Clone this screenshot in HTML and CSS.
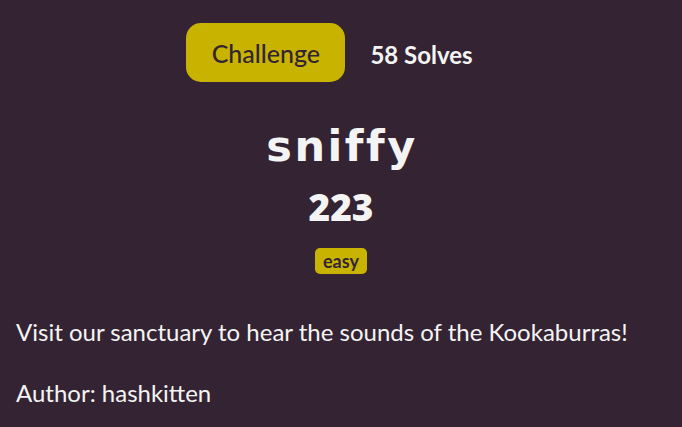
FILE: index.html
```html
<!DOCTYPE html>
<html>
<head>
<meta charset="utf-8">
<link rel="stylesheet" href="styles.css">
</head>
<body>
<div class="modal">
  <div class="tabs">
    <span class="tab active">Challenge</span>
    <span class="tab">58 Solves</span>
  </div>
  <h1 class="name">sniffy</h1>
  <div class="points">223</div>
  <div class="tags"><span class="tag">easy</span></div>
  <div class="desc">
    <p>Visit our sanctuary to hear the sounds of the Kookaburras!</p>
    <p>Author: hashkitten</p>
  </div>
</div>
</body>
</html>
```

FILE: styles.css
```css
html, body {
  margin: 0;
  padding: 0;
  background: #342433;
}
body {
  width: 682px;
  height: 427px;
  overflow: hidden;
  font-family: Lato, "Liberation Sans", sans-serif;
  color: #f4f4f4;
}
.modal {
  padding: 23px 16px 0 16px;
}
.tabs {
  display: flex;
  justify-content: center;
  align-items: center;
  gap: 25px;
  padding-right: 23px;
}
.tab {
  font-family: Lato, sans-serif;
  font-size: 24px;
  font-weight: 700;
  color: #f4f4f4;
  padding-top: 3px;
}
.tab.active {
  background: #c8b400;
  color: #342433;
  border-radius: 15px;
  width: 159px;
  height: 59px;
  padding-top: 0;
  display: flex;
  align-items: center;
  justify-content: center;
  font-size: 25px;
  font-weight: 500;
}
.name {
  margin: 39px 0 0 0;
  padding-left: 2px;
  text-align: center;
  font-family: "DejaVu Sans", sans-serif;
  font-weight: 700;
  font-size: 43px;
  line-height: 50px;
  letter-spacing: 2.5px;
  color: #f4f4f4;
}
.points {
  text-align: center;
  font-family: "Open Sans", sans-serif;
  font-weight: 800;
  font-size: 37px;
  line-height: 44px;
  margin-top: 14px;
}
.tags {
  display: flex;
  justify-content: center;
  margin-top: 19px;
}
.tag {
  background: #c8b400;
  color: #342433;
  font-weight: 700;
  font-size: 18px;
  line-height: 26px;
  padding: 0 8px;
  border-radius: 5px;
}
.desc {
  margin-top: 43px;
}
.desc p {
  margin: 0 0 32px 0;
  font-size: 24px;
  line-height: 29px;
}
```
